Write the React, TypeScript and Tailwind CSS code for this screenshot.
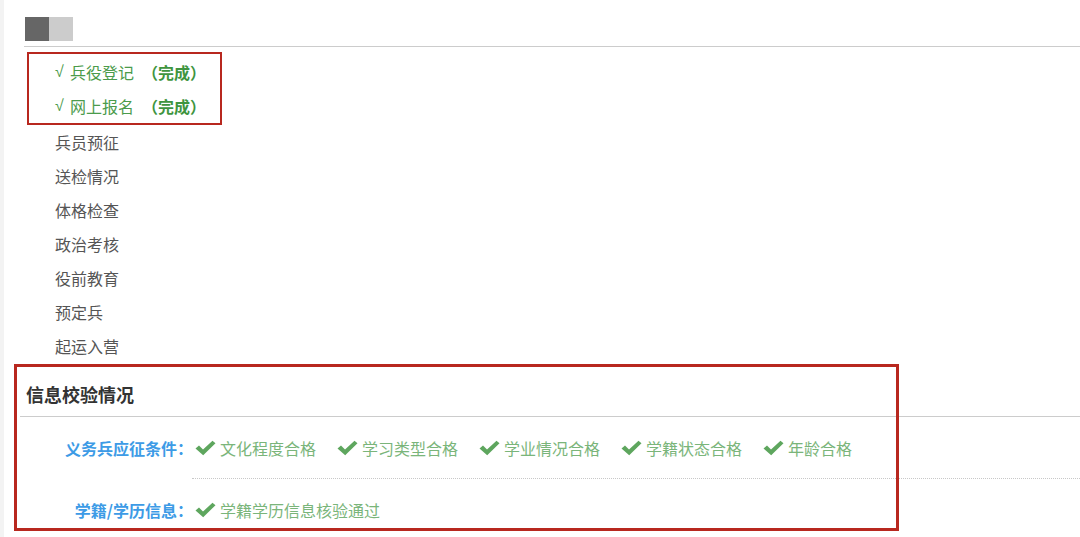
import React from "react";

const font = { fontFamily: '"Noto Sans CJK SC", "Noto Sans", sans-serif' };

function Check() {
  return (
    <svg width="21" height="16" viewBox="0 0 21 16" className="shrink-0">
      <path d="M0.5 8.5 L4 5.5 L8 9.5 L17.5 0.8 L20.5 3.2 L8.2 15.2 Z" fill="#5ea65e" />
    </svg>
  );
}

const steps = ["兵员预征", "送检情况", "体格检查", "政治考核", "役前教育", "预定兵", "起运入营"];
const checks = ["文化程度合格", "学习类型合格", "学业情况合格", "学籍状态合格", "年龄合格"];

export default function App() {
  return (
    <div style={font} className="w-[1080px] h-[537px] overflow-hidden bg-white border-l-[4px] border-[#f3f3f3] relative">
      <div className="pl-[20px] pt-[17px]">
        <div className="flex h-[24px] pl-[1px]">
          <div className="w-[24px] h-[24px] bg-[#666666]" />
          <div className="w-[24px] h-[24px] bg-[#cccccc]" />
        </div>
        <div className="mt-[5px] h-px bg-[#cccccc]" />
      </div>

      <div className="mt-[5px] ml-[23px] w-[195px] border-2 border-[#b8281f] pl-[26px] pt-[1px]">
        {["兵役登记", "网上报名"].map((t) => (
          <div key={t} className="h-[34px] flex items-center text-[16px] text-[#4b9b4b] whitespace-nowrap">
            <span className="font-['Liberation_Sans',sans-serif] w-[15px]">√</span>
            <span>{t}</span>
            <span className="ml-[8px] font-bold text-[#3f953f]">（完成）</span>
          </div>
        ))}
      </div>

      <div className="pl-[51px]">
        {steps.map((s) => (
          <div key={s} className="h-[34px] flex items-center text-[16px] text-[#555555]">
            {s}
          </div>
        ))}
      </div>

      <div className="relative -mt-[1px]">
        <div className="pl-[22px] pt-[20px] pb-[10px]">
          <div className="h-[24px] flex items-center text-[18px] font-bold text-[#333333]">信息校验情况</div>
        </div>
        <div className="ml-[16px] h-px bg-[#cccccc]" />

        <div className="flex h-[61px] items-center">
          <div className="w-[189px] text-right text-[16px] font-bold text-[#3d9be6] shrink-0">义务兵应征条件：</div>
          <div className="flex items-center gap-[21px] pl-[2px]">
            {checks.map((c) => (
              <div key={c} className="flex items-center gap-[4px]">
                <Check />
                <span className="text-[16px] text-[#7ab57a]">{c}</span>
              </div>
            ))}
          </div>
        </div>
        <div className="ml-[188px] border-t border-dotted border-[#c8c8c8]" />
        <div className="flex h-[61px] items-center">
          <div className="w-[189px] text-right text-[16px] font-bold text-[#3d9be6] shrink-0">学籍/学历信息：</div>
          <div className="flex items-center gap-[4px] pl-[2px]">
            <Check />
            <span className="text-[16px] text-[#7ab57a]">学籍学历信息核验通过</span>
          </div>
        </div>

        <div className="absolute left-[10px] top-[2px] w-[885px] h-[167px] border-[3px] border-[#b8281f] pointer-events-none" />
      </div>
    </div>
  );
}
